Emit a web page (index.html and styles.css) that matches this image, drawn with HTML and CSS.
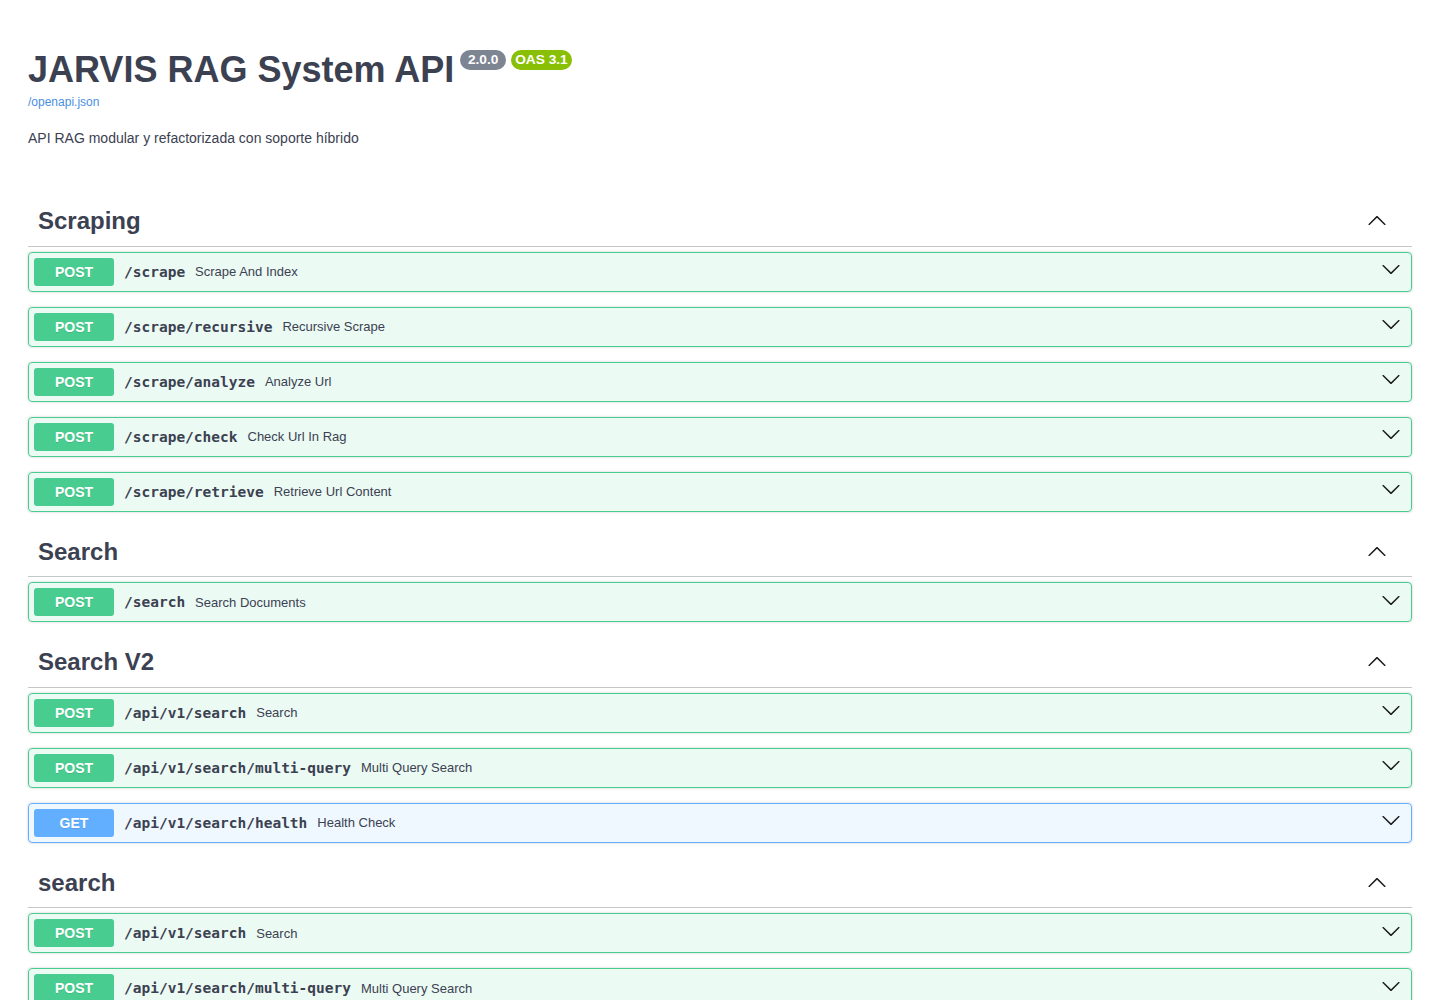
FILE: index.html
```html
<!DOCTYPE html>
<html lang="es">
<head>
    <meta charset="UTF-8">
    <meta name="viewport" content="width=device-width, initial-scale=1.0">
    <title>JARVIS RAG System API - Swagger UI</title>
    <link rel="stylesheet" href="styles.css">
</head>
<body>

<div class="wrapper">
    <div class="info">
        <div class="title-row">
            <h2 class="title">JARVIS RAG System API</h2>
            <span class="badge version"> 2.0.0 </span>
            <span class="badge oas">OAS 3.1</span>
        </div>
        <a class="spec-link" href="#">/openapi.json</a>
        <p class="description">API RAG modular y refactorizada con soporte híbrido</p>
    </div>

    <!-- Scraping -->
    <div class="tag-section">
        <h3 class="tag">
            <span>Scraping</span>
            <svg class="arrow-up" width="20" height="20" viewBox="0 0 20 20"><path d="M17.418 14.908c.272.268.709.268.979 0s.27-.701 0-.969l-7.908-7.830c-.27-.268-.707-.268-.979 0l-7.908 7.830c-.27.268-.27.701 0 .969.271.268.709.268.979 0L10 7.767l7.418 7.141z"/></svg>
        </h3>
        <div class="opblock post"><span class="method">POST</span><span class="path">/scrape</span><span class="summary">Scrape And Index</span><svg class="arrow-down" width="20" height="20" viewBox="0 0 20 20"><path d="M17.418 6.109c.272-.268.709-.268.979 0s.271.701 0 .969l-7.908 7.83c-.27.268-.707.268-.979 0l-7.908-7.83c-.27-.268-.27-.701 0-.969.271-.268.709-.268.979 0L10 13.25l7.418-7.141z"/></svg></div>
        <div class="opblock post"><span class="method">POST</span><span class="path">/scrape/recursive</span><span class="summary">Recursive Scrape</span><svg class="arrow-down" width="20" height="20" viewBox="0 0 20 20"><path d="M17.418 6.109c.272-.268.709-.268.979 0s.271.701 0 .969l-7.908 7.83c-.27.268-.707.268-.979 0l-7.908-7.83c-.27-.268-.27-.701 0-.969.271-.268.709-.268.979 0L10 13.25l7.418-7.141z"/></svg></div>
        <div class="opblock post"><span class="method">POST</span><span class="path">/scrape/analyze</span><span class="summary">Analyze Url</span><svg class="arrow-down" width="20" height="20" viewBox="0 0 20 20"><path d="M17.418 6.109c.272-.268.709-.268.979 0s.271.701 0 .969l-7.908 7.83c-.27.268-.707.268-.979 0l-7.908-7.83c-.27-.268-.27-.701 0-.969.271-.268.709-.268.979 0L10 13.25l7.418-7.141z"/></svg></div>
        <div class="opblock post"><span class="method">POST</span><span class="path">/scrape/check</span><span class="summary">Check Url In Rag</span><svg class="arrow-down" width="20" height="20" viewBox="0 0 20 20"><path d="M17.418 6.109c.272-.268.709-.268.979 0s.271.701 0 .969l-7.908 7.83c-.27.268-.707.268-.979 0l-7.908-7.83c-.27-.268-.27-.701 0-.969.271-.268.709-.268.979 0L10 13.25l7.418-7.141z"/></svg></div>
        <div class="opblock post"><span class="method">POST</span><span class="path">/scrape/retrieve</span><span class="summary">Retrieve Url Content</span><svg class="arrow-down" width="20" height="20" viewBox="0 0 20 20"><path d="M17.418 6.109c.272-.268.709-.268.979 0s.271.701 0 .969l-7.908 7.83c-.27.268-.707.268-.979 0l-7.908-7.83c-.27-.268-.27-.701 0-.969.271-.268.709-.268.979 0L10 13.25l7.418-7.141z"/></svg></div>
    </div>

    <!-- Search -->
    <div class="tag-section">
        <h3 class="tag">
            <span>Search</span>
            <svg class="arrow-up" width="20" height="20" viewBox="0 0 20 20"><path d="M17.418 14.908c.272.268.709.268.979 0s.27-.701 0-.969l-7.908-7.830c-.27-.268-.707-.268-.979 0l-7.908 7.830c-.27.268-.27.701 0 .969.271.268.709.268.979 0L10 7.767l7.418 7.141z"/></svg>
        </h3>
        <div class="opblock post"><span class="method">POST</span><span class="path">/search</span><span class="summary">Search Documents</span><svg class="arrow-down" width="20" height="20" viewBox="0 0 20 20"><path d="M17.418 6.109c.272-.268.709-.268.979 0s.271.701 0 .969l-7.908 7.83c-.27.268-.707.268-.979 0l-7.908-7.83c-.27-.268-.27-.701 0-.969.271-.268.709-.268.979 0L10 13.25l7.418-7.141z"/></svg></div>
    </div>

    <!-- Search V2 -->
    <div class="tag-section">
        <h3 class="tag">
            <span>Search V2</span>
            <svg class="arrow-up" width="20" height="20" viewBox="0 0 20 20"><path d="M17.418 14.908c.272.268.709.268.979 0s.27-.701 0-.969l-7.908-7.830c-.27-.268-.707-.268-.979 0l-7.908 7.830c-.27.268-.27.701 0 .969.271.268.709.268.979 0L10 7.767l7.418 7.141z"/></svg>
        </h3>
        <div class="opblock post"><span class="method">POST</span><span class="path">/api/v1/search</span><span class="summary">Search</span><svg class="arrow-down" width="20" height="20" viewBox="0 0 20 20"><path d="M17.418 6.109c.272-.268.709-.268.979 0s.271.701 0 .969l-7.908 7.83c-.27.268-.707.268-.979 0l-7.908-7.830c-.27-.268-.27-.701 0-.969.271-.268.709-.268.979 0L10 13.25l7.418-7.141z"/></svg></div>
        <div class="opblock post"><span class="method">POST</span><span class="path">/api/v1/search/multi-query</span><span class="summary">Multi Query Search</span><svg class="arrow-down" width="20" height="20" viewBox="0 0 20 20"><path d="M17.418 6.109c.272-.268.709-.268.979 0s.271.701 0 .969l-7.908 7.83c-.27.268-.707.268-.979 0l-7.908-7.83c-.27-.268-.27-.701 0-.969.271-.268.709-.268.979 0L10 13.25l7.418-7.141z"/></svg></div>
        <div class="opblock get"><span class="method">GET</span><span class="path">/api/v1/search/health</span><span class="summary">Health Check</span><svg class="arrow-down" width="20" height="20" viewBox="0 0 20 20"><path d="M17.418 6.109c.272-.268.709-.268.979 0s.271.701 0 .969l-7.908 7.83c-.27.268-.707.268-.979 0l-7.908-7.83c-.27-.268-.27-.701 0-.969.271-.268.709-.268.979 0L10 13.25l7.418-7.141z"/></svg></div>
    </div>

    <!-- search -->
    <div class="tag-section">
        <h3 class="tag">
            <span>search</span>
            <svg class="arrow-up" width="20" height="20" viewBox="0 0 20 20"><path d="M17.418 14.908c.272.268.709.268.979 0s.27-.701 0-.969l-7.908-7.830c-.27-.268-.707-.268-.979 0l-7.908 7.830c-.27.268-.27.701 0 .969.271.268.709.268.979 0L10 7.767l7.418 7.141z"/></svg>
        </h3>
        <div class="opblock post"><span class="method">POST</span><span class="path">/api/v1/search</span><span class="summary">Search</span><svg class="arrow-down" width="20" height="20" viewBox="0 0 20 20"><path d="M17.418 6.109c.272-.268.709-.268.979 0s.271.701 0 .969l-7.908 7.83c-.27.268-.707.268-.979 0l-7.908-7.83c-.27-.268-.27-.701 0-.969.271-.268.709-.268.979 0L10 13.25l7.418-7.141z"/></svg></div>
        <div class="opblock post"><span class="method">POST</span><span class="path">/api/v1/search/multi-query</span><span class="summary">Multi Query Search</span><svg class="arrow-down" width="20" height="20" viewBox="0 0 20 20"><path d="M17.418 6.109c.272-.268.709-.268.979 0s.271.701 0 .969l-7.908 7.83c-.27.268-.707.268-.979 0l-7.908-7.83c-.27-.268-.27-.701 0-.969.271-.268.709-.268.979 0L10 13.25l7.418-7.141z"/></svg></div>
    </div>
</div>

</body>
</html>
```

FILE: styles.css
```css
body {
    margin: 0;
    padding: 0;
    font-family: "Liberation Sans", Arial, sans-serif;
    color: #3b4151;
    background-color: #fff;
}
.wrapper {
    padding: 0 28px;
}
.info {
    padding-top: 50px;
    margin-bottom: 50.4px;
}
.title-row {
    display: flex;
    align-items: flex-start;
}
.title {
    margin: 0;
    font-size: 36px;
    line-height: 40px;
    font-weight: 700;
    color: #3b4151;
}
.badge {
    margin: 0 0 0 6px;
    padding: 2px 4px;
    border-radius: 57px;
    color: #fff;
    font-size: 13.7px;
    line-height: 16px;
    font-weight: 700;
    white-space: pre;
}
.badge.version {
    background-color: #7d8492;
}
.badge.oas {
    margin-left: 5px;
    background-color: #89bf04;
}
.spec-link {
    display: block;
    margin-top: 5px;
    font-size: 12px;
    line-height: 14px;
    color: #4990e2;
    text-decoration: none;
}
.description {
    margin: 21px 0 0;
    font-size: 14px;
    line-height: 16px;
}
.tag {
    display: flex;
    align-items: center;
    justify-content: space-between;
    margin: 0 0 5px;
    padding: 10px 25px 10px 10px;
    font-size: 24px;
    line-height: 29.5px;
    font-weight: 700;
    border-bottom: 1px solid rgba(59, 65, 81, 0.3);
}
.arrow-up {
    fill: #1b1b1b;
    margin-bottom: 2px;
}
.opblock {
    display: flex;
    align-items: center;
    margin: 0 0 15px;
    padding: 5px 10px 5px 5px;
    border: 1px solid #49cc90;
    border-radius: 4px;
    background-color: rgba(73, 204, 144, 0.1);
    box-shadow: 0 0 3px rgba(0, 0, 0, 0.19);
}
.opblock.get {
    border-color: #61affe;
    background-color: rgba(97, 175, 254, 0.1);
}
.method {
    min-width: 80px;
    padding: 6px 0;
    border-radius: 3px;
    background-color: #49cc90;
    color: #fff;
    text-align: center;
    font-size: 14px;
    line-height: 16px;
    font-weight: 700;
    text-shadow: 0 1px 0 rgba(0, 0, 0, 0.1);
}
.get .method {
    background-color: #61affe;
}
.path {
    padding: 0 10px;
    font-family: "DejaVu Sans Mono", monospace;
    font-size: 14.5px;
    font-weight: 700;
    color: #3b4151;
}
.summary {
    flex: 1;
    font-size: 13px;
    color: #3b4151;
}
.arrow-down {
    fill: #1b1b1b;
    margin-bottom: 5px;
}
```
